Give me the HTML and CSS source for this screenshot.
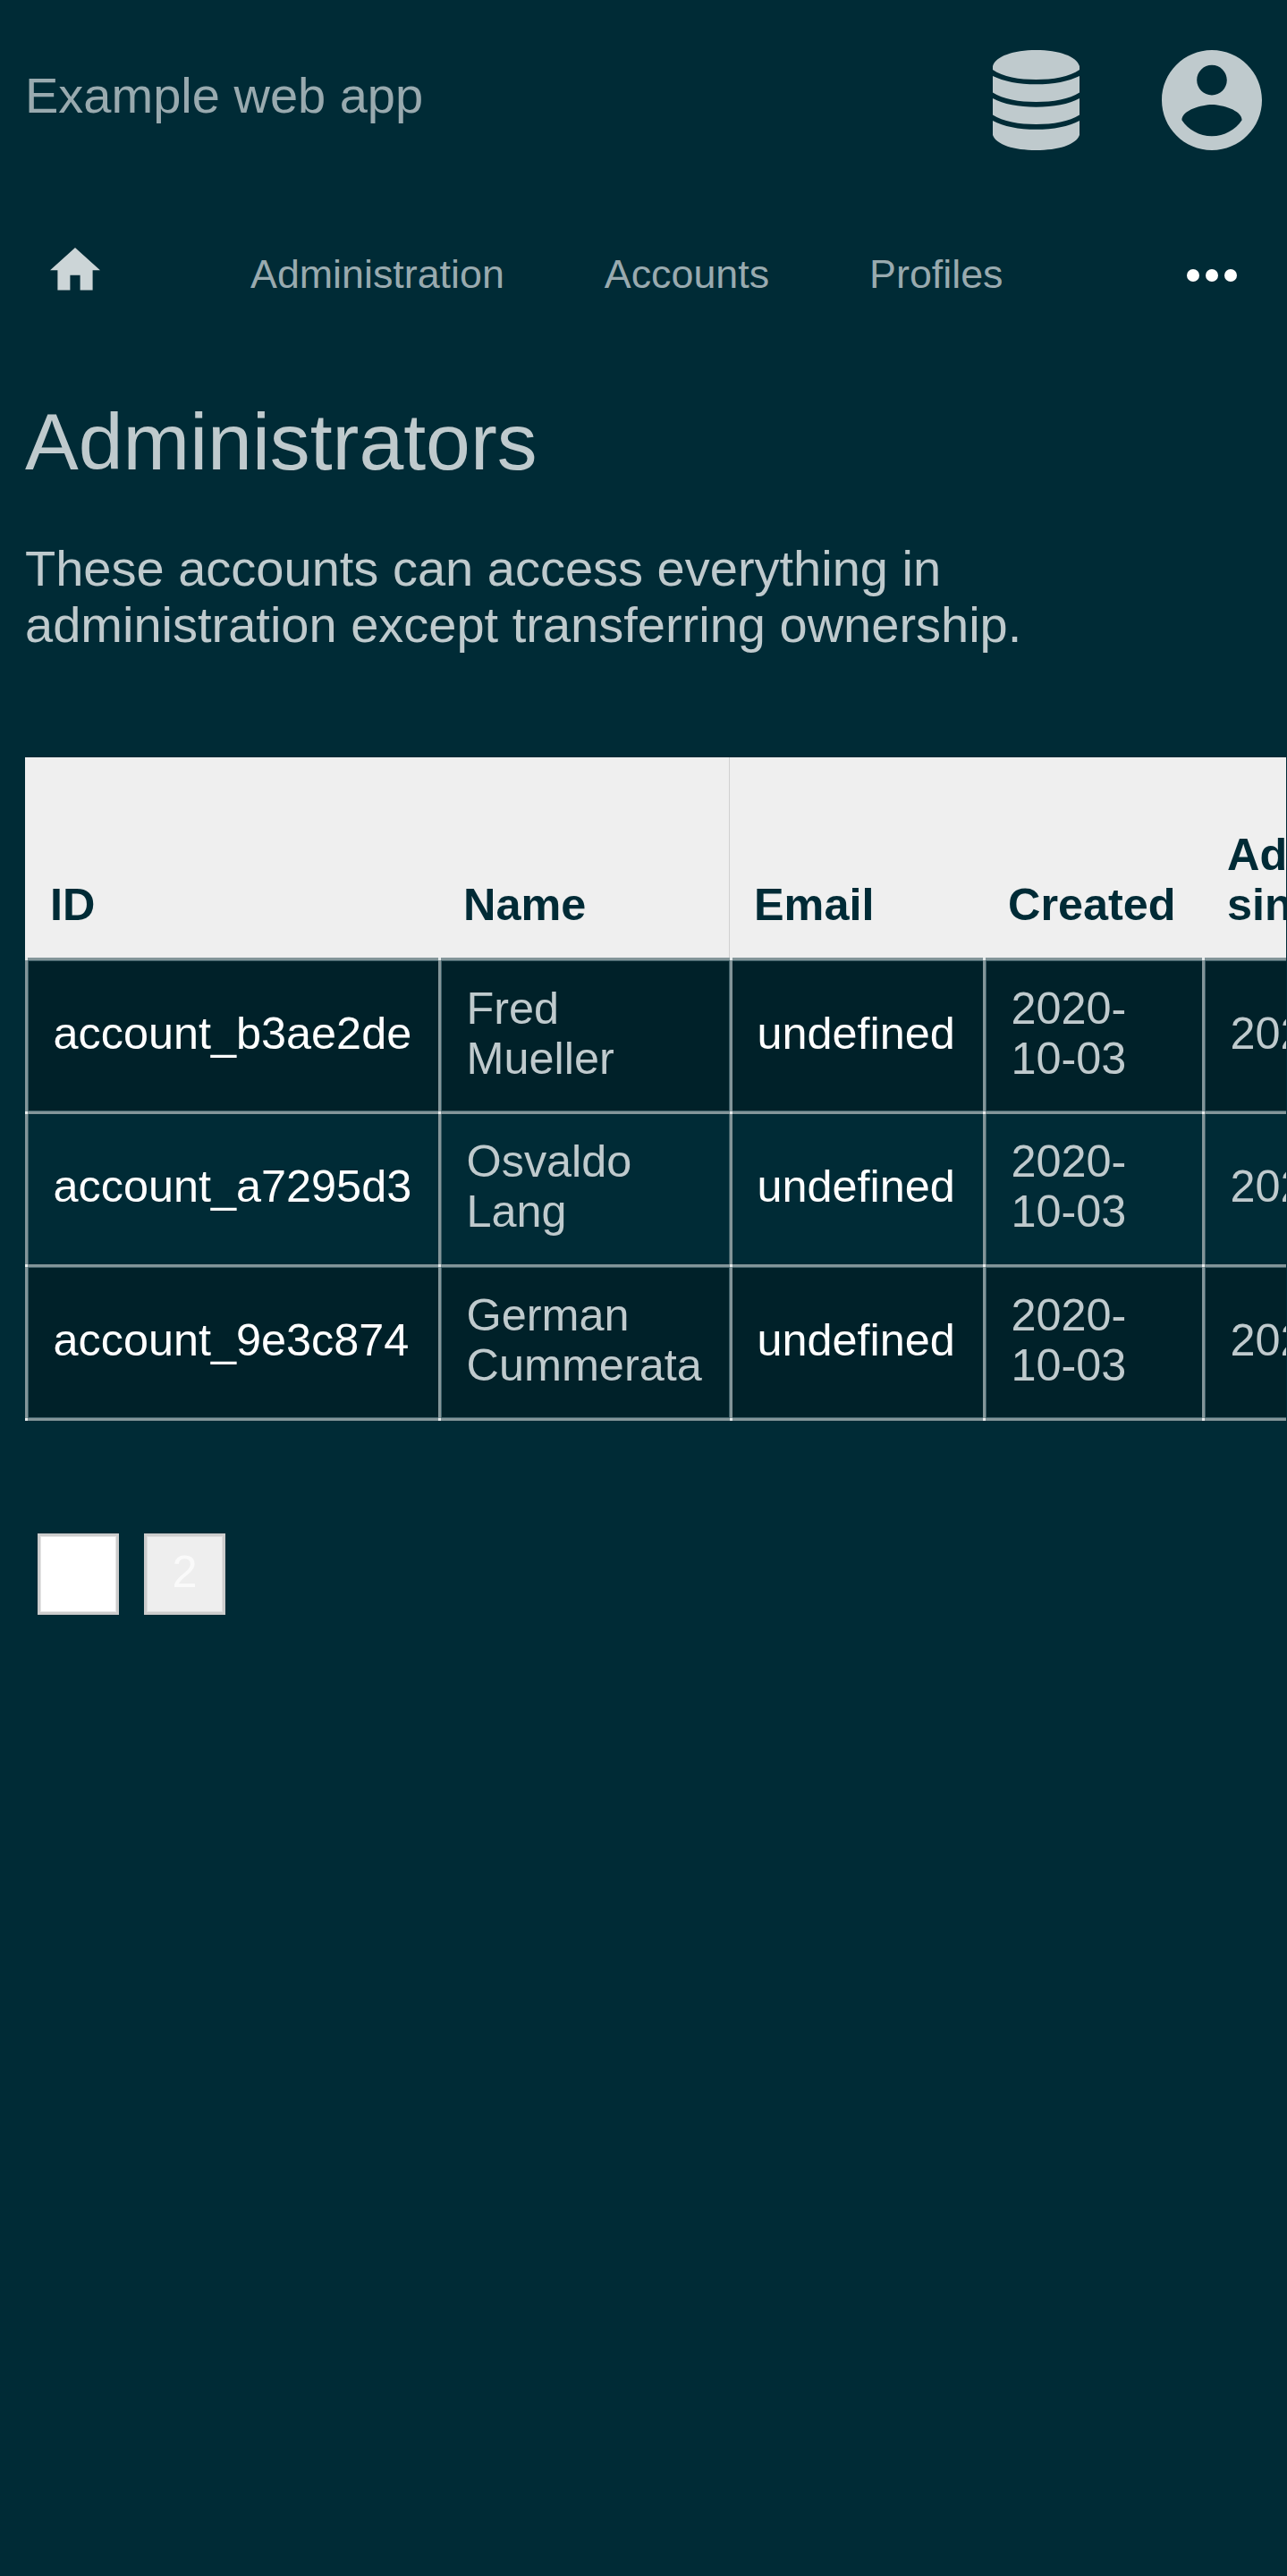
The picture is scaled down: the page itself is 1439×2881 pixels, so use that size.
FILE: index.html
```html
<!DOCTYPE html>
<html lang="en">
<head>
<meta charset="utf-8">
<title>Administrators</title>
<link rel="stylesheet" href="styles.css">
</head>
<body>
<header class="header">
  <div class="brand">Example web app</div>
  <svg class="icon-data" viewBox="0 0 97 112"><path d="M0 18C3 7 23 0 48.5 0S94 7 97 18V22C86 30 67 33 48.5 33S11 30 0 22ZM0 29C12 35 29 38.3 48.5 38.3S85 35 97 29V47.5C86 55 67 58 48.5 58S11 55 0 47.5ZM0 54C12 60.5 29 63.7 48.5 63.7S85 60.5 97 54V72.5C86 80 67 83 48.5 83S11 80 0 72.5ZM0 79C12 85.5 29 88.8 48.5 88.8S85 85.5 97 79V95C93 106 73 112 48.5 112S4 106 0 95Z"/></svg>
  <svg class="icon-user" viewBox="2 2 20 20"><path d="M12 2C6.48 2 2 6.48 2 12s4.48 10 10 10 10-4.48 10-10S17.52 2 12 2zm0 3c1.66 0 3 1.34 3 3s-1.34 3-3 3-3-1.34-3-3 1.34-3 3-3zm0 14.2c-2.5 0-4.71-1.28-6-3.22.03-1.99 4-3.08 6-3.08 1.99 0 5.97 1.09 6 3.08-1.29 1.94-3.5 3.22-6 3.22z"/></svg>
</header>
<nav class="nav">
  <svg class="icon-home" viewBox="2 3 20 17"><path d="M10 20v-6h4v6h5v-8h3L12 3 2 12h3v8z"/></svg>
  <a>Administration</a>
  <a>Accounts</a>
  <a>Profiles</a>
  <svg class="icon-more" viewBox="0 0 56 14"><circle cx="7" cy="7" r="7"/><circle cx="28" cy="7" r="7"/><circle cx="49" cy="7" r="7"/></svg>
</nav>
<main class="main">
  <h1>Administrators</h1>
  <p>These accounts can access everything in<br>administration except transferring ownership.</p>
  <div class="table-wrap">
    <table>
      <colgroup><col class="c-id"><col class="c-name"><col class="c-email"><col class="c-created"><col class="c-since"></colgroup>
      <thead>
        <tr><th>ID</th><th>Name</th><th class="ruled">Email</th><th>Created</th><th>Admin<br>since</th></tr>
      </thead>
      <tbody>
        <tr class="odd first"><td class="link">account_b3ae2de</td><td>Fred<br>Mueller</td><td class="link shifted">undefined</td><td>2020-<br>10-03</td><td>2020-10-03</td></tr>
        <tr class="even"><td class="link">account_a7295d3</td><td>Osvaldo<br>Lang</td><td class="link shifted">undefined</td><td>2020-<br>10-03</td><td>2020-10-03</td></tr>
        <tr class="odd"><td class="link">account_9e3c874</td><td>German<br>Cummerata</td><td class="link shifted">undefined</td><td>2020-<br>10-03</td><td>2020-10-03</td></tr>
        <tr class="end"><td></td><td></td><td class="shifted"></td><td></td><td></td></tr>
      </tbody>
    </table>
  </div>
  <div class="pages"><a class="page current">1</a><a class="page">2</a></div>
</main>
</body>
</html>
```
FILE: styles.css
```css
* { box-sizing: border-box; }
html { background: #002b36; }
body {
  margin: 0;
  width: 1439px;
  min-height: 2881px;
  overflow-x: hidden;
  background: #002b36;
  color: #bfcacd;
  font: 56px/63px "Liberation Sans", Arial, sans-serif;
}
svg { display: block; flex: none; }

.header {
  display: flex;
  height: 224px;
  padding: 56px 28.5px 0 28px;
  fill: #bfcacd;
}
.brand { flex: 1; padding-top: 19px; color: #99aaaf; }
.icon-data { width: 97px; height: 112px; margin-right: 91.5px; }
.icon-user { width: 112px; height: 112px; }

.nav {
  display: flex;
  height: 168px;
  padding: 56px 56.5px 0 56px;
  color: #99aaaf;
  font-size: 44.8px;
  line-height: 52px;
}
.icon-home { width: 56px; height: 47.6px; margin: -3px 168px 0 0; fill: #ccd5d7; }
.nav a { margin-right: 112px; }
.icon-more { width: 56px; height: 14px; margin: 21px 0 0 auto; fill: #fff; }

.main { padding-left: 28px; }
h1 {
  margin: 0;
  padding-top: 51px;
  font-size: 89.6px;
  font-weight: 400;
  line-height: 102px;
}
p { margin: 59px 0 117px; }

.table-wrap { margin-right: 1px; overflow: hidden; }
table {
  width: 1680px;
  table-layout: fixed;
  border-collapse: separate;
  border-spacing: 0;
  font-size: 50.4px;
  line-height: 56px;
}
.c-id { width: 462px; }
.c-name { width: 325px; }
.c-email { width: 284px; }
.c-created { width: 245px; }
th {
  height: 224px;
  padding: 0 28px 31px;
  background: #efefef;
  color: #002b36;
  text-align: left;
  vertical-align: bottom;
}
th.ruled { background: linear-gradient(#d0d0d0, #d0d0d0) 0 0 / 1px 100% no-repeat #efefef; }

/* Cell rules are 3px wide with a 1px soft edge; each cell paints its own left and top rule. */
td {
  --rule: #839599;
  --soft: #41626a;
  --joint: #e6ebec;
  --row: #002b36;
  --x: 0px;
  --y: 0px;
  height: 171px;
  padding: 0 28px 2px 31.5px;
  vertical-align: middle;
  white-space: nowrap;
  background:
    linear-gradient(var(--joint), var(--joint)) var(--x) var(--y) / 3px 3px no-repeat,
    linear-gradient(var(--rule), var(--rule)) 0 var(--y) / 100% 3px no-repeat,
    linear-gradient(var(--rule), var(--rule)) var(--x) 0 / 3px 100% no-repeat,
    linear-gradient(var(--soft), var(--soft)) 0 0 / 100% 4px no-repeat,
    linear-gradient(var(--soft), var(--soft)) 0 0 / 4px 100% no-repeat,
    var(--row);
}
.odd td { --row: #002129; }
.first td { --y: 0px; }
.even td { --y: 1px; height: 172px; padding-bottom: 3px; }
.end td { --y: 1px; height: 4px; padding: 0; }
td.shifted { --x: 1px; }
.link { color: #fff; }

.pages { display: flex; gap: 28px; margin: 126px 0 0 14px; }
.page {
  width: 91px;
  height: 91px;
  border: 3px solid #ccc;
  box-shadow: inset 0 0 0 1px #ddd;
  background: #eee;
  color: #fafafa;
  font-size: 50.4px;
  line-height: 79px;
  text-align: center;
}
.page.current { background: #fff; color: #fff; box-shadow: inset 0 0 0 1px #e5e5e5; }
```
